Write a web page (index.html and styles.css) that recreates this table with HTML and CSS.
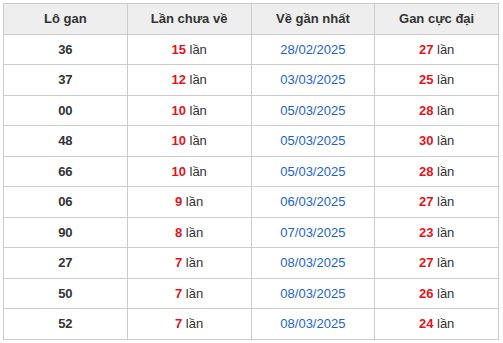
FILE: index.html
```html
<!DOCTYPE html>
<html>

<head>
    <meta name="viewport" content="width=device-width,initial-scale=1.0">
    <title>Lô gan</title>
    <link rel="stylesheet" href="styles.css">
</head>

<body>
    <table class="gan-table">
        <thead>
            <tr>
                <th>Lô gan</th>
                <th>Lần chưa về</th>
                <th>Về gần nhất</th>
                <th>Gan cực đại</th>
            </tr>
        </thead>
        <tbody>
            <tr><td class="num">36</td><td><b class="red">15</b> lần</td><td class="date">28/02/2025</td><td><b class="red">27</b> lần</td></tr>
            <tr><td class="num">37</td><td><b class="red">12</b> lần</td><td class="date">03/03/2025</td><td><b class="red">25</b> lần</td></tr>
            <tr><td class="num">00</td><td><b class="red">10</b> lần</td><td class="date">05/03/2025</td><td><b class="red">28</b> lần</td></tr>
            <tr><td class="num">48</td><td><b class="red">10</b> lần</td><td class="date">05/03/2025</td><td><b class="red">30</b> lần</td></tr>
            <tr><td class="num">66</td><td><b class="red">10</b> lần</td><td class="date">05/03/2025</td><td><b class="red">28</b> lần</td></tr>
            <tr><td class="num">06</td><td><b class="red">9</b> lần</td><td class="date">06/03/2025</td><td><b class="red">27</b> lần</td></tr>
            <tr><td class="num">90</td><td><b class="red">8</b> lần</td><td class="date">07/03/2025</td><td><b class="red">23</b> lần</td></tr>
            <tr><td class="num">27</td><td><b class="red">7</b> lần</td><td class="date">08/03/2025</td><td><b class="red">27</b> lần</td></tr>
            <tr><td class="num">50</td><td><b class="red">7</b> lần</td><td class="date">08/03/2025</td><td><b class="red">26</b> lần</td></tr>
            <tr><td class="num">52</td><td><b class="red">7</b> lần</td><td class="date">08/03/2025</td><td><b class="red">24</b> lần</td></tr>
        </tbody>
    </table>
</body>

</html>
```

FILE: styles.css
```css
body {
    margin: 0;
    padding: 3px;
    font-family: "Liberation Sans", Arial, sans-serif;
    font-size: 13px;
    color: #333;
    background: #fff;
}

.gan-table {
    width: 496px;
    border-collapse: collapse;
    table-layout: fixed;
}

.gan-table th,
.gan-table td {
    border: 1px solid #ccc;
    text-align: center;
    padding: 7px 0;
    line-height: 15.5px;
}

.gan-table th {
    background: #eee;
    font-weight: bold;
    color: #333;
}

.num {
    font-weight: bold;
}

.red {
    color: #e3131b;
}

.date {
    color: #1d63cf;
}
```
